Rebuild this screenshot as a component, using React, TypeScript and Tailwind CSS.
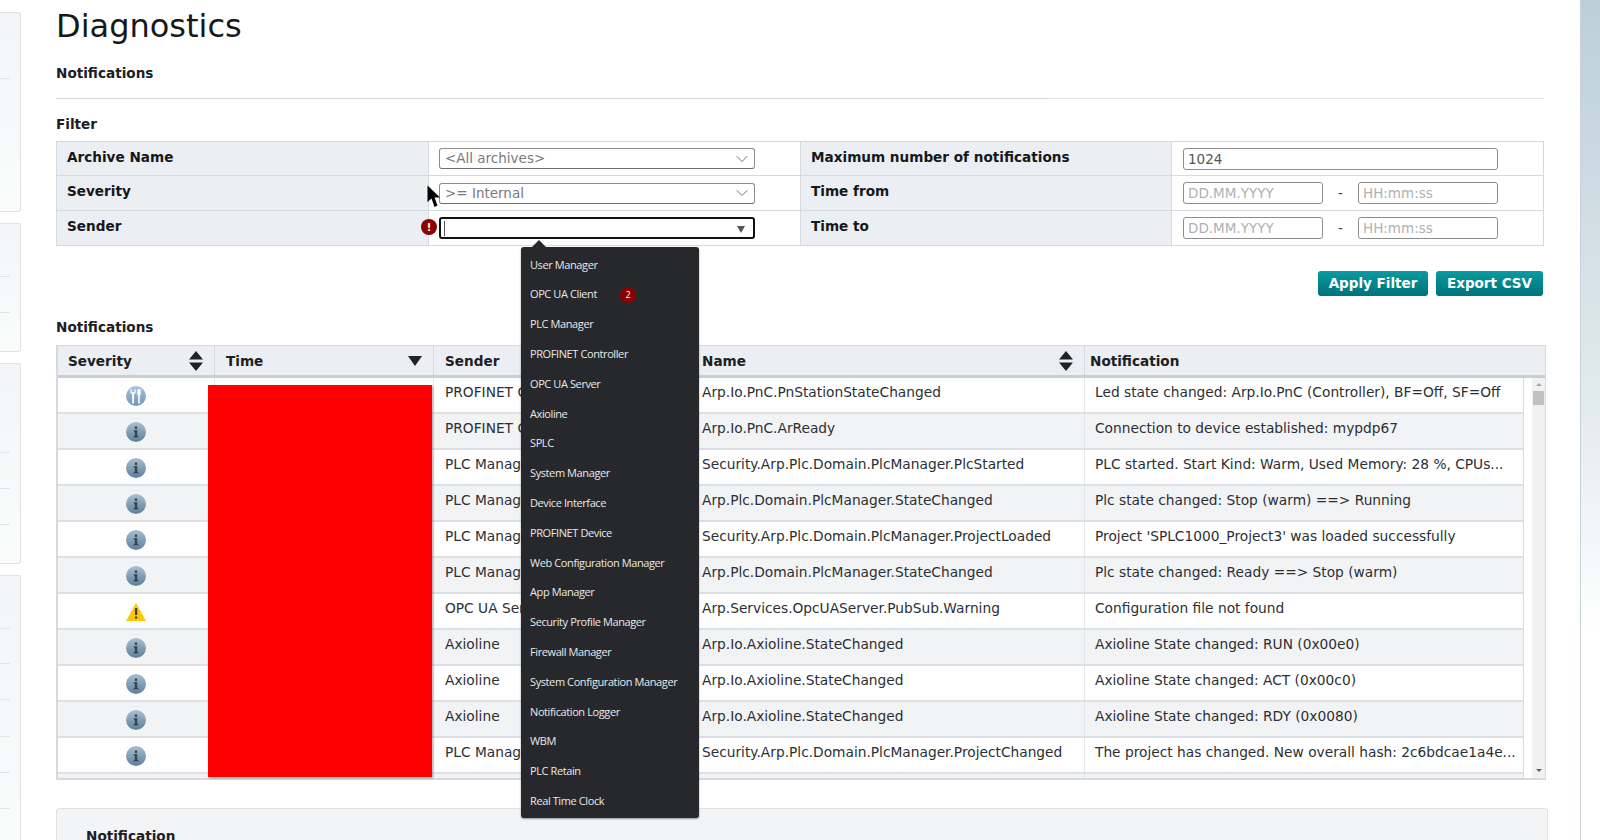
import { ChevronDown } from 'lucide-react';

const rows = [
  { icon: 'tool', sender: 'PROFINET Controller', name: 'Arp.Io.PnC.PnStationStateChanged', text: 'Led state changed: Arp.Io.PnC (Controller), BF=Off, SF=Off' },
  { icon: 'info', sender: 'PROFINET Controller', name: 'Arp.Io.PnC.ArReady', text: 'Connection to device established: mypdp67' },
  { icon: 'info', sender: 'PLC Manager', name: 'Security.Arp.Plc.Domain.PlcManager.PlcStarted', text: 'PLC started. Start Kind: Warm, Used Memory: 28 %, CPUs...' },
  { icon: 'info', sender: 'PLC Manager', name: 'Arp.Plc.Domain.PlcManager.StateChanged', text: 'Plc state changed: Stop (warm) ==> Running' },
  { icon: 'info', sender: 'PLC Manager', name: 'Security.Arp.Plc.Domain.PlcManager.ProjectLoaded', text: "Project 'SPLC1000_Project3' was loaded successfully" },
  { icon: 'info', sender: 'PLC Manager', name: 'Arp.Plc.Domain.PlcManager.StateChanged', text: 'Plc state changed: Ready ==> Stop (warm)' },
  { icon: 'warn', sender: 'OPC UA Server', name: 'Arp.Services.OpcUAServer.PubSub.Warning', text: 'Configuration file not found' },
  { icon: 'info', sender: 'Axioline', name: 'Arp.Io.Axioline.StateChanged', text: 'Axioline State changed: RUN (0x00e0)' },
  { icon: 'info', sender: 'Axioline', name: 'Arp.Io.Axioline.StateChanged', text: 'Axioline State changed: ACT (0x00c0)' },
  { icon: 'info', sender: 'Axioline', name: 'Arp.Io.Axioline.StateChanged', text: 'Axioline State changed: RDY (0x0080)' },
  { icon: 'info', sender: 'PLC Manager', name: 'Security.Arp.Plc.Domain.PlcManager.ProjectChanged', text: 'The project has changed. New overall hash: 2c6bdcae1a4e...' },
  { icon: 'none', sender: '', name: '', text: '' },
];

const senders = [
  'User Manager',
  'OPC UA Client',
  'PLC Manager',
  'PROFINET Controller',
  'OPC UA Server',
  'Axioline',
  'SPLC',
  'System Manager',
  'Device Interface',
  'PROFINET Device',
  'Web Configuration Manager',
  'App Manager',
  'Security Profile Manager',
  'Firewall Manager',
  'System Configuration Manager',
  'Notification Logger',
  'WBM',
  'PLC Retain',
  'Real Time Clock',
];

function SeverityIcon({ kind }: { kind: string }) {
  if (kind === 'none') return null;
  if (kind === 'warn') {
    return (
      <svg width="20" height="20" viewBox="0 0 20 20">
        <path d="M10 1 L20 19 L0 19 Z" fill="#ffc70a" />
        <rect x="9" y="6" width="2.2" height="7" fill="#3c3c28" />
        <rect x="9" y="14.5" width="2.2" height="2.2" fill="#3c3c28" />
      </svg>
    );
  }
  return (
    <svg width="20" height="20" viewBox="0 0 20 20">
      <defs>
        <linearGradient id="infoFill" x1="0" y1="0" x2="0" y2="1">
          <stop offset="0" stopColor="#a9bfd1" />
          <stop offset="1" stopColor="#5f7f9e" />
        </linearGradient>
        <linearGradient id="toolFill" x1="0" y1="0" x2="0" y2="1">
          <stop offset="0" stopColor="#a8c4dc" />
          <stop offset="1" stopColor="#7096b8" />
        </linearGradient>
      </defs>
      {kind === 'info' ? (
        <g>
          <circle cx="10" cy="10" r="10" fill="url(#infoFill)" />
          <g fill="#34414f">
            <rect x="8.8" y="4.5" width="2.4" height="2.4" />
            <rect x="7.8" y="8.4" width="3.4" height="1.3" />
            <rect x="8.8" y="8.4" width="2.4" height="6.4" />
            <rect x="7.6" y="14" width="4.8" height="1.3" />
          </g>
        </g>
      ) : (
        <g>
          <circle cx="10" cy="10" r="10" fill="url(#toolFill)" />
          <g fill="#ffffff">
            <path d="M4.6 3 V6.8 L6.2 8.2 V17.5 H8 V8.2 L9.6 6.8 V3 L8.4 3.6 V6.2 H5.8 V3.6 Z" />
            <path d="M11.4 3 H14.6 L14.8 8 L13.8 9.4 V17.5 H12.2 V9.4 L11.2 8 Z" />
          </g>
        </g>
      )}
    </svg>
  );
}

function SortIcon() {
  return (
    <svg width="14" height="20" viewBox="0 0 14 20" className="shrink-0">
      <path d="M7 0 L14 8.5 H0 Z M0 11.5 H14 L7 20 Z" fill="#1f2327" />
    </svg>
  );
}

function Select({ text }: { text: string }) {
  return (
    <div className="flex h-[21px] w-[316px] items-center justify-between rounded-[3px] border border-[#8d8d8d] border-b-[#6f6f6f] bg-white pl-[5px] pr-[2px] text-[13.5px] text-[#777b80]">
      <span>{text}</span>
      <ChevronDown size={20} strokeWidth={1} className="shrink-0 text-[#555]" />
    </div>
  );
}

function TextBox({ value, width, hint }: { value?: string; width: string; hint?: string }) {
  return (
    <input
      readOnly
      value={value}
      placeholder={hint}
      className={`${width} h-[22px] rounded-[3px] border border-[#8d8d8d] bg-white px-[4px] text-[13.5px] text-[#555] outline-none placeholder:text-[#aeb1b4]`}
    />
  );
}

function DateTime() {
  return (
    <div className="flex items-center">
      <TextBox width="w-[140px]" hint="DD.MM.YYYY" />
      <span className="w-[35px] text-center text-[13.5px] text-[#444]">-</span>
      <TextBox width="w-[140px]" hint="HH:mm:ss" />
    </div>
  );
}

function FilterRow({ left, mid, right, end, height }: { left: string; mid: React.ReactNode; right: string; end: React.ReactNode; height: string }) {
  return (
    <div className={`flex ${height}`}>
      <div className="flex w-[372px] items-start border-r border-[#d6dadd] bg-[#ebeef2] pl-[10px] pt-[6px] font-bold leading-[18px] text-[#15181b]">{left}</div>
      <div className="flex w-[371px] items-center pl-[10px]">{mid}</div>
      <div className="flex w-[372px] items-start border-x border-[#d6dadd] bg-[#ebeef2] pl-[10px] pt-[6px] font-bold leading-[18px] text-[#15181b]">{right}</div>
      <div className="flex flex-1 items-center pl-[11px]">{end}</div>
    </div>
  );
}

function SideCard({ className, lines }: { className: string; lines: number[] }) {
  return (
    <div className={`relative w-[21px] shrink-0 rounded-r-[3px] border border-l-0 border-[#dfe3e6] bg-gradient-to-b from-[#f3f5f7] to-[#fbfcfc] ${className}`}>
      {lines.map((top) => (
        <div key={top} className="absolute left-0 h-px w-[10px] bg-[#e2e5e8]" style={{ top }} />
      ))}
    </div>
  );
}

export default function App() {
  return (
    <div className="relative flex h-[840px] w-[1600px] overflow-hidden bg-white font-['DejaVu_Sans',sans-serif] text-[13.6px] text-[#1c2024]">
      {/* left nav, mostly cut off */}
      <div className="flex w-[21px] shrink-0 flex-col gap-[11px] pt-[12px]">
        <SideCard className="h-[200px]" lines={[65]} />
        <SideCard className="h-[129px]" lines={[52, 88]} />
        <SideCard className="h-[201px]" lines={[88, 124, 160]} />
        <SideCard className="h-[300px]" lines={[52, 87, 123, 160, 196, 232]} />
      </div>

      <div className="ml-[35px] w-[1492px] shrink-0">
        <h1 className="mt-[6px] h-[40px] text-[32px] font-normal leading-[40px] text-[#16191c]">Diagnostics</h1>
        <div className="mt-[18px] font-bold leading-[18px]">Notifications</div>
        <div className="mt-[16px] flex h-px w-[1488px]">
          <div className="h-px w-[992px] bg-[#d6dadd]" />
          <div className="h-px flex-1 bg-[#e5e8ea]" />
        </div>
        <div className="mt-[16px] font-bold leading-[18px]">Filter</div>

        <div className="mt-[8px] w-[1488px] border border-[#d6dadd]">
          <FilterRow height="h-[34px] border-b border-[#d6dadd]" left="Archive Name" mid={<Select text="<All archives>" />} right="Maximum number of notifications" end={<TextBox width="w-[315px]" value="1024" />} />
          <FilterRow height="h-[35px] border-b border-[#d6dadd]" left="Severity" mid={<Select text=">= Internal" />} right="Time from" end={<DateTime />} />
          <FilterRow
            height="h-[34px]"
            left="Sender"
            mid={
              <div className="flex h-[22px] w-[316px] items-center justify-between rounded-[3px] border-2 border-[#111] bg-white pl-[3px] pr-[8px]">
                <span className="h-[15px] w-px bg-[#555]" />
                <span className="mt-[3px] h-0 w-0 border-x-[4px] border-t-[7px] border-x-transparent border-t-[#555]" />
              </div>
            }
            right="Time to"
            end={<DateTime />}
          />
        </div>

        <div className="mt-[25px] flex w-[1487px] justify-end gap-[8px]">
          <button className="h-[25px] w-[110px] rounded-[3px] bg-gradient-to-b from-[#0a9aa3] to-[#00727a] text-[13.5px] font-bold text-white">Apply Filter</button>
          <button className="h-[25px] w-[107px] rounded-[3px] bg-gradient-to-b from-[#0a9aa3] to-[#00727a] text-[13.5px] font-bold text-white">Export CSV</button>
        </div>

        <div className="mt-[22px] font-bold leading-[18px]">Notifications</div>

        {/* notifications table */}
        <div className="mt-[9px] h-[435px] w-[1490px] overflow-hidden border border-b-2 border-l-2 border-[#d6dadd]">
          <div className="flex h-[32px] items-start border-b-[3px] border-[#c9ced3] bg-[#ebeef2] font-bold leading-[18px]">
            <div className="flex h-full w-[157px] items-center justify-between border-r border-[#d6dadd] pl-[10px] pr-[11px] pt-px">
              <span>Severity</span>
              <SortIcon />
            </div>
            <div className="flex h-full w-[219px] items-center justify-between border-r border-[#d6dadd] pl-[11px] pr-[11px] pt-px">
              <span>Time</span>
              <span className="h-0 w-0 border-x-[7px] border-t-[10px] border-x-transparent border-t-[#1f2327]" />
            </div>
            <div className="flex h-full w-[263px] items-center border-r border-[#d6dadd] pl-[11px] pt-px">Sender</div>
            <div className="flex h-full w-[388px] items-center justify-between border-r border-[#d6dadd] pl-[5px] pr-[11px] pt-px">
              <span>Name</span>
              <SortIcon />
            </div>
            <div className="flex h-full flex-1 items-center pl-[5px] pt-px">Notification</div>
          </div>

          <div className="flex">
            <div className="w-[1466px] shrink-0 border-r border-[#d6dadd]">
              {rows.map((row, i) => (
                <div key={i} className={`flex h-[36px] border-b-2 border-[#dcdfe3] text-[13.75px] leading-[18px] text-[#2b2f33] ${i % 2 ? 'bg-[#f2f3f5]' : 'bg-white'}`}>
                  <div className="flex w-[157px] justify-center border-r border-[#e3e6e9] pt-[8px]">
                    <SeverityIcon kind={row.icon} />
                  </div>
                  <div className="w-[219px] border-r border-[#e3e6e9]" />
                  <div className="w-[263px] overflow-hidden whitespace-nowrap border-r border-[#e3e6e9] pl-[11px] pt-[5px]">{row.sender}</div>
                  <div className="w-[388px] overflow-hidden whitespace-nowrap border-r border-[#e3e6e9] pl-[5px] pt-[5px]">{row.name}</div>
                  <div className="flex-1 overflow-hidden whitespace-nowrap pl-[10px] pt-[5px]">{row.text}</div>
                </div>
              ))}
            </div>
            {/* scrollbar */}
            <div className="flex h-[400px] w-[21px] justify-end">
              <div className="flex w-[13px] flex-col items-center bg-[#f1f1f1] pt-[5px]">
                <span className="h-0 w-0 border-x-[3px] border-b-[3px] border-x-transparent border-b-[#a3a3a3]" />
                <div className="mt-[5px] h-[14px] w-[11px] bg-[#c1c1c1]" />
                <span className="mb-[6px] mt-auto h-0 w-0 border-x-[3px] border-t-[3px] border-x-transparent border-t-[#606060]" />
              </div>
            </div>
          </div>
        </div>

        <div className="mt-[28px] h-[60px] w-[1492px] rounded-[3px] border border-[#dfe2e5] bg-[#f3f4f6] pl-[29px] pt-[18px] font-bold leading-[18px]">Notification</div>
      </div>

      <div className="ml-[32px] h-full w-[20px] shrink-0 border-l border-[#c6d2d8] bg-gradient-to-b from-[#bccfd9] via-[#e4ecef] via-50% to-white to-75%" />

      {/* redaction block painted over the time column */}
      <div className="absolute left-[208px] top-[385px] h-[392px] w-[224px] bg-[#ff0000] shadow-[1px_1px_2px_rgba(0,0,0,0.35)]" />

      {/* error badge on the sender field */}
      <div className="absolute left-[421px] top-[219px] flex h-[16px] w-[16px] items-center justify-center rounded-full bg-[#8b0000] text-[10px] font-bold text-white">!</div>

      {/* mouse pointer */}
      <svg className="absolute left-[427px] top-[185px]" width="15" height="24" viewBox="0 0 15 24">
        <path d="M0.5 0.5 L0.5 17 L4.5 13.5 L7.5 22 L10.5 20.5 L7.5 12.5 L13 12.5 Z" fill="#000" />
      </svg>

      {/* sender dropdown */}
      <div className="absolute left-[521px] top-[247px] flex h-[571px] w-[178px] flex-col items-start rounded-[3px] bg-[#27282c] pl-[9px] pt-[3px] font-['Open_Sans',sans-serif] text-[11px] tracking-[-0.4px] text-[#e8e8e8] shadow-[0_1px_2px_rgba(0,0,0,0.4)]">
        <span className="absolute left-[11px] top-[-7px] h-0 w-0 border-x-[7px] border-b-[7px] border-x-transparent border-b-[#27282c]" />
        {senders.map((name) => (
          <div key={name} className="flex h-[29.8px] shrink-0 items-center whitespace-nowrap">
            <span>{name}</span>
            {name === 'OPC UA Client' && (
              <span className="ml-[23px] flex h-[16px] w-[16px] items-center justify-center rounded-full bg-[#8b0000] text-[9px] text-white">2</span>
            )}
          </div>
        ))}
      </div>
    </div>
  );
}
